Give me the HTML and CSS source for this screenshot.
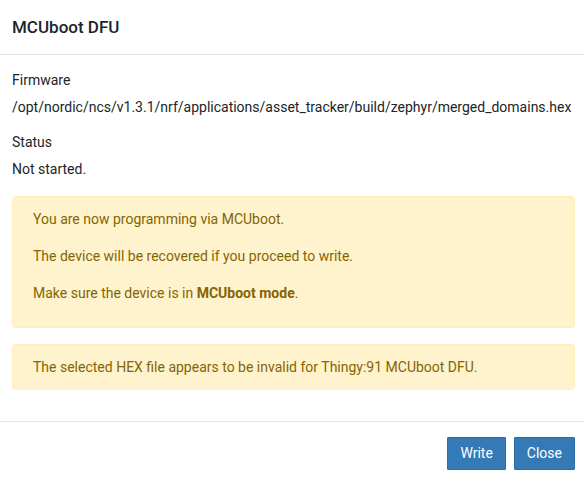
FILE: index.html
```html
<!DOCTYPE html>
<html lang="en">
<head>
<meta charset="utf-8">
<title>MCUboot DFU</title>
<link rel="stylesheet" href="styles.css">
</head>
<body>
<div class="modal">
  <div class="modal-header">
    <h4 class="modal-title">MCUboot DFU</h4>
  </div>
  <div class="modal-body">
    <div class="group">
      <div class="label">Firmware</div>
      <div class="value">/opt/nordic/ncs/v1.3.1/nrf/applications/asset_tracker/build/zephyr/merged_domains.hex</div>
    </div>
    <div class="group last">
      <div class="label">Status</div>
      <div class="value">Not started.</div>
    </div>
    <div class="alert multi">
      <p>You are now programming via MCUboot.</p>
      <p>The device will be recovered if you proceed to write.</p>
      <p>Make sure the device is in <strong>MCUboot mode</strong>.</p>
    </div>
    <div class="alert">The selected HEX file appears to be invalid for Thingy:91 MCUboot DFU.</div>
  </div>
  <div class="modal-footer">
    <button class="btn">Write</button>
    <button class="btn">Close</button>
  </div>
</div>
</body>
</html>
```

FILE: styles.css
```css
html, body {
  margin: 0;
  padding: 0;
  background: #ffffff;
}
body {
  font-family: Roboto, "Liberation Sans", Arial, sans-serif;
  font-size: 14px;
  color: #212529;
}
.modal {
  width: 584px;
}
.modal-header {
  padding: 15px 9px 15px 12px;
  border-bottom: 1px solid #e5e5e5;
}
.modal-title {
  margin: 0;
  font-size: 17px;
  font-weight: 500;
  line-height: 24px;
  color: #212529;
}
.modal-body {
  padding: 15px 9px 15px 12px;
}
.group {
  line-height: 21px;
  margin-bottom: 14px;
}
.group.last {
  margin-bottom: 16px;
}
.label {
  margin-bottom: 6px;
}
.alert {
  background: #fff3cd;
  border: 1px solid #ffeeba;
  border-radius: 4px;
  color: #856404;
  padding: 12px 20px;
  line-height: 20px;
  margin-bottom: 16px;
}
.alert p {
  margin: 0 0 17px;
}
.alert p:last-child {
  margin-bottom: 12px;
}
.alert strong {
  font-weight: 700;
}
.modal-footer {
  border-top: 1px solid #e5e5e5;
  padding: 15px 9px 10px 12px;
  display: flex;
  justify-content: flex-end;
  gap: 8px;
}
.btn {
  font-family: Roboto, "Liberation Sans", Arial, sans-serif;
  font-size: 14px;
  line-height: 19px;
  padding: 6px 12px;
  color: #ffffff;
  background: #337ab7;
  border: 1px solid #2e6da4;
  border-radius: 1px;
  cursor: pointer;
}
```
